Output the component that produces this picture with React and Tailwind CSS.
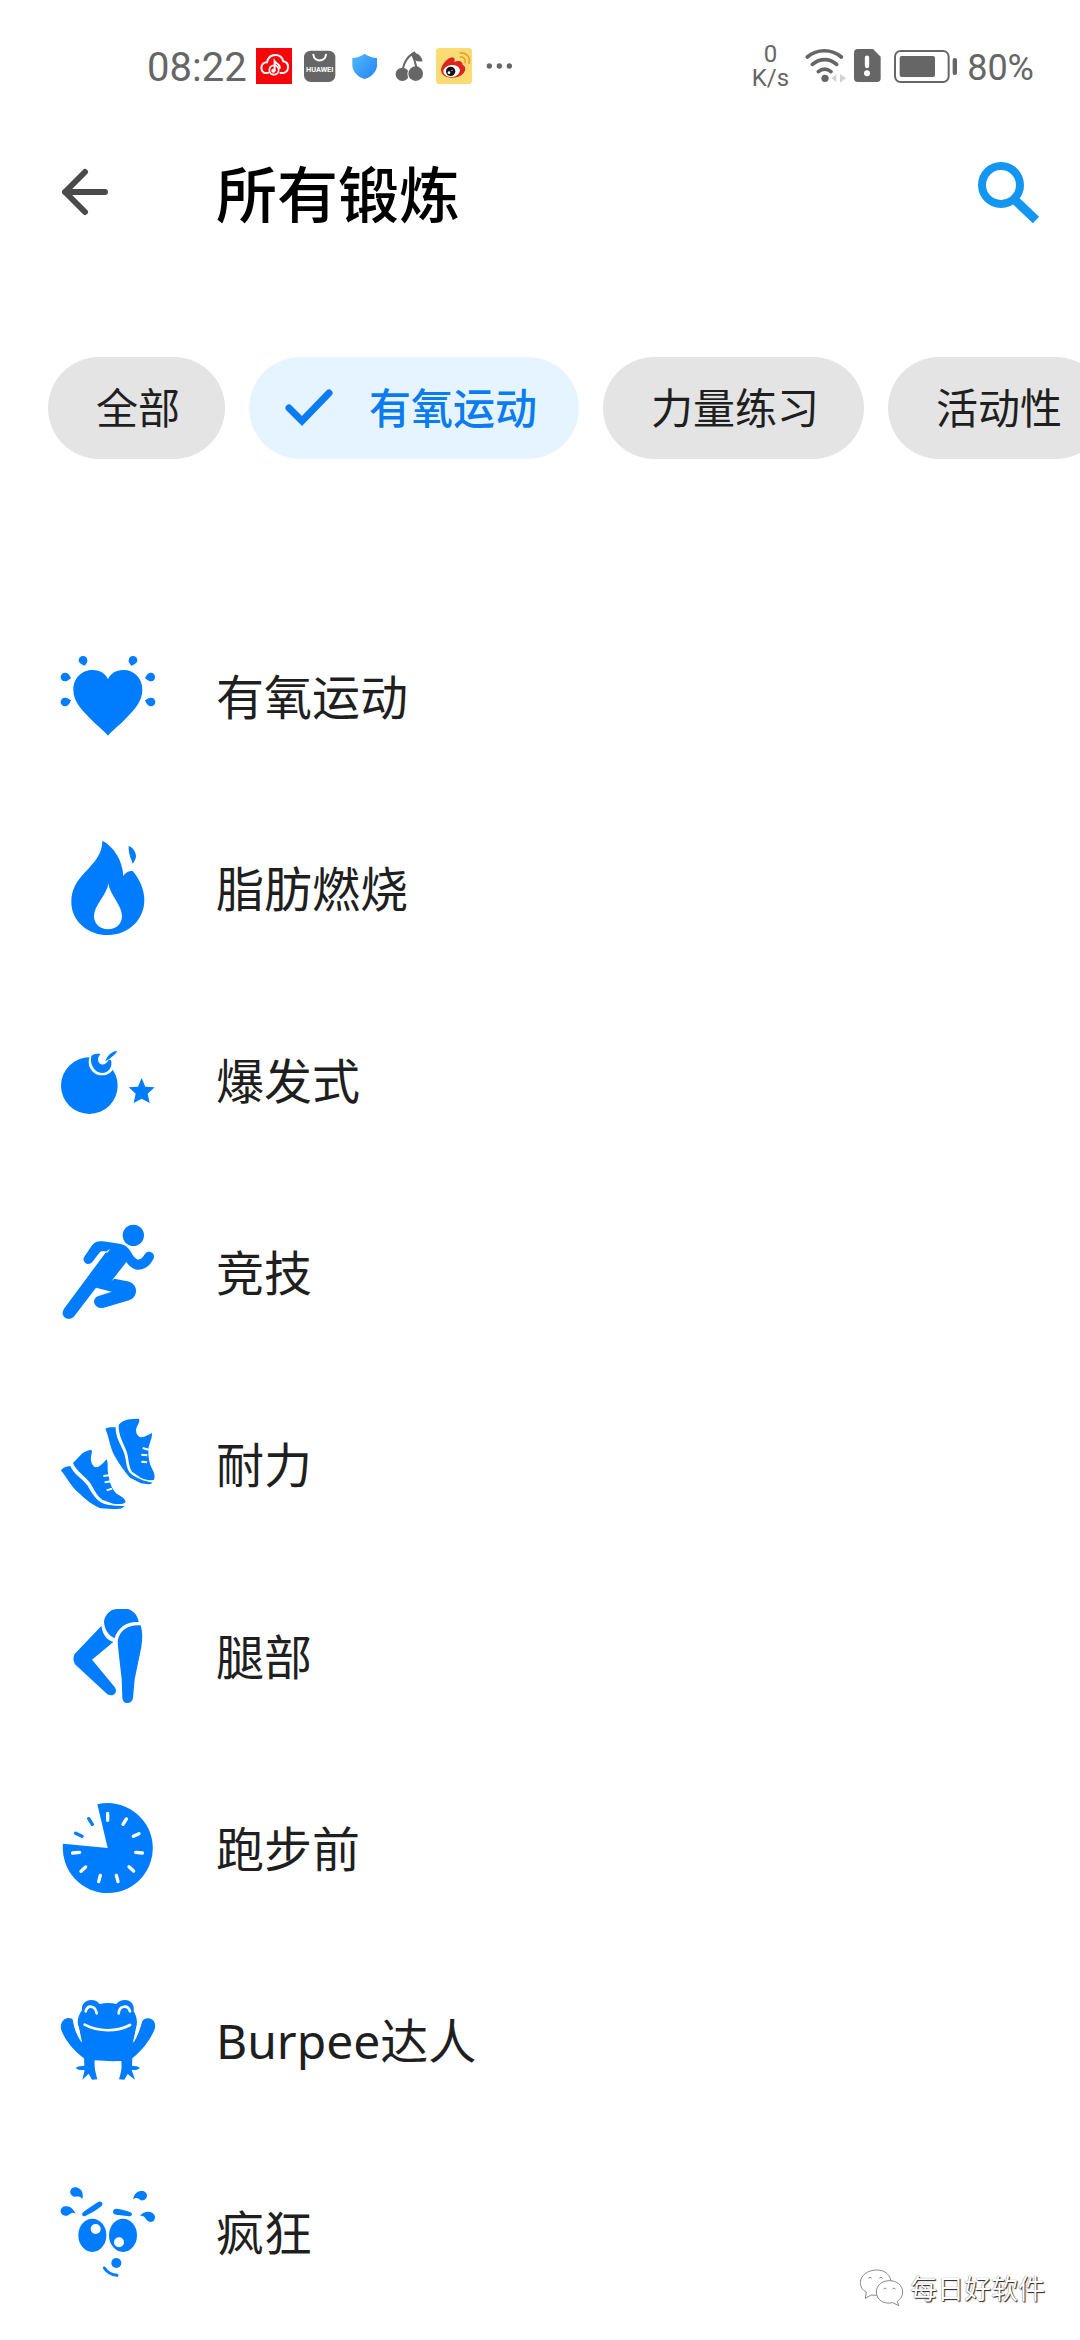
import React, { useState } from 'react';

const filters = ['全部', '有氧运动', '力量练习', '活动性'];

const HeartIcon = () => (
    <svg viewBox="60 24 288 288" fill="currentColor" className="size-24 shrink-0" aria-hidden="true">
        <path d="M204 287C196 276 178 263 158 243C128 212 100 187 100 149C100 112 128 90 158 90C181 90 197 101 204 118C211 101 227 90 250 90C280 90 307 112 307 149C307 187 280 212 250 243C230 263 212 276 204 287Z" />
        <path d="M134 77C122 73 116 68 116 61C116 53 122 48 129 48C137 48 142 54 142 61C142 67 139 72 134 77Z" />
        <path d="M274 77C286 73 292 68 292 61C292 53 286 48 279 48C271 48 266 54 266 61C266 67 269 72 274 77Z" />
        <path d="M93 114C85 121 80 124 75 124C67 124 62 118 62 111C62 104 68 98 75 98C83 98 88 103 93 114Z" />
        <path d="M315 114C323 121 328 124 333 124C341 124 345 118 345 111C345 104 340 98 333 98C325 98 320 103 315 114Z" />
        <path d="M93 181C85 175 80 173 75 173C67 173 62 179 62 186C62 193 68 199 75 199C83 199 88 193 93 181Z" />
        <path d="M315 181C323 175 328 173 333 173C341 173 346 179 346 186C346 193 340 199 333 199C325 199 320 193 315 181Z" />
    </svg>
);

const FlameIcon = () => (
    <svg viewBox="60 600 288 288" fill="currentColor" className="size-24 shrink-0" aria-hidden="true">
        <path fillRule="evenodd" d="M187 602C222 620 248 662 250 708C257 697 267 692 278 693C298 716 313 748 313 780C313 839 266 885 204 885C142 885 94 842 94 785C94 749 111 722 135 697C166 664 187 640 187 602ZM205 730C203 762 162 795 162 829C162 852 181 868 204 868C228 868 246 852 246 829C246 795 208 762 205 730Z" />
        <path d="M266 618C278 622 287 634 288 648C288 657 283 664 278 671C274 656 265 644 266 618Z" />
    </svg>
);

const BombIcon = () => (
    <svg viewBox="60 6 288 288" fill="currentColor" className="size-24 shrink-0" aria-hidden="true">
        <circle cx="148" cy="167" r="85" />
        <circle cx="186" cy="96" r="40" fill="white" />
        <path d="M154 78C161 71 170 70 182 72C173 80 172 91 178 99C187 108 200 103 205 91L213 90C219 112 205 129 186 129C164 129 148 103 154 78Z" />
        <path d="M196 93C202 77 214 64 231 62C229 71 222 74 216 80C209 87 203 90 196 93Z" />
        <path d="M305 144L316 170L344 172L323 191L329 219L305 206L281 219L287 191L266 172L294 170Z" />
    </svg>
);

const RunnerIcon = () => (
    <svg viewBox="60 42 288 288" fill="currentColor" className="size-24 shrink-0" aria-hidden="true">
        <circle cx="280" cy="76" r="32" />
        <path d="M132 142L155 107C163 96 175 92 189 94L238 101C255 104 265 112 273 126C279 138 285 146 294 149C304 148 309 142 314 133C319 124 329 123 337 129C344 135 343 143 338 151C326 171 311 180 293 179C279 178 268 169 259 156L214 214L223 206L262 214C279 218 289 229 288 245C287 257 280 266 267 271L192 293C179 297 167 291 163 280C160 270 165 261 176 258L215 245L168 233L104 317C97 327 83 330 74 322C66 315 66 305 72 296L199 125C192 122 181 122 176 131L157 156C151 163 141 164 135 158C130 153 129 147 132 142Z" />
        <path d="M192 130L210 116L204 127Z" fill="white" />
    </svg>
);

const ShoesIcon = () => (
    <svg viewBox="60 48 288 288" fill="currentColor" className="size-24 shrink-0" aria-hidden="true">
        <path d="M99 189L127 160C136 154 145 150 153 149C158 153 155 161 153 170C151 185 158 200 168 202C180 202 190 188 200 178C206 192 201 207 205 222C208 244 214 266 230 281C243 289 254 293 257 305C251 314 235 313 219 311L187 299C168 285 162 266 150 248C137 230 108 213 99 189Z" />
        <path d="M63 212C69 202 80 199 91 198C100 222 128 236 143 257C153 275 163 292 181 306C199 318 232 317 253 318C248 327 235 327 219 327L181 325C154 314 134 295 113 276C91 256 80 230 63 212Z" />
        <path d="M236 75C244 64 260 58 277 57L296 56C302 61 294 72 290 82C285 96 291 108 302 112C314 112 324 104 336 99C337 118 325 132 325 153C325 171 327 188 335 204C341 215 347 227 342 239C330 243 315 239 302 233L276 215C264 196 267 174 260 155C252 132 235 108 236 75Z" />
        <path d="M196 86C204 81 216 82 227 82C226 112 243 135 252 158C259 177 257 200 270 219C288 235 315 244 337 248C332 254 320 253 303 250L270 233C251 211 235 188 222 164C209 137 207 110 196 86Z" />
        <path d="M190 228L208 226M194 247L214 244M200 271L216 266M308 144L326 149M304 164L322 166M304 185L321 187" stroke="white" strokeWidth="6" />
    </svg>
);

const LegIcon = () => (
    <svg viewBox="60 54 288 288" fill="currentColor" className="size-24 shrink-0" aria-hidden="true">
        <path d="M229 57L264 57C281 62 294 78 296 96C262 94 234 111 224 144C204 137 194 118 192 96C194 76 208 59 229 57Z" />
        <path d="M184 108C188 133 199 150 220 156L156 209L224 291C231 301 228 311 220 314C212 318 204 315 198 309L108 226C99 217 98 199 106 190Z" />
        <path d="M302 106C308 126 308 146 304 171L284 268L279 324C277 334 271 339 262 339C253 339 248 333 247 324L245 268L235 180L233 153C238 120 267 103 302 106Z" />
    </svg>
);

const ClockIcon = () => (
    <svg viewBox="60 30 288 288" fill="currentColor" className="size-24 shrink-0" aria-hidden="true">
        <path d="M203 174L172 43A135 135 0 1 1 69 161Z" />
        <path d="M203 70V91M259 87L249 103M297 131L280 139M287 187L307 189M267 230L281 243M229 256L234 275M181 256L176 275M137 231L123 244M119 187L98 189" stroke="white" strokeWidth="10" strokeLinecap="round" />
        <path d="M146 86L157 103M107 130L126 139" stroke="currentColor" strokeWidth="10" strokeLinecap="round" />
    </svg>
);

const FrogIcon = () => (
    <svg viewBox="60 36 288 288" fill="currentColor" className="size-24 shrink-0" aria-hidden="true">
        <path d="M126 91C124 72 137 60 153 60C165 60 174 65 179 72C196 68 214 68 229 72C235 64 244 60 256 60C272 60 284 73 281 94C290 108 294 127 288 144L280 188C292 170 297 149 304 128C309 117 320 113 331 116C345 120 348 135 344 147C333 176 310 208 277 235L276 257C285 259 293 257 300 264C293 270 284 271 275 270L285 299L263 282L253 299L237 298C239 287 247 274 244 243C215 244 187 243 164 241C162 268 169 282 172 298L156 299L146 281L127 299L134 270C123 271 114 270 107 264C115 257 125 259 133 257L132 235C99 211 73 178 63 147C60 130 69 117 83 114C91 113 96 116 100 120C105 145 111 166 125 185L117 145C109 127 114 107 126 91Z" />
        <path d="M104 116L116 140L126 188C111 168 102 146 98 116ZM304 118L290 142L278 189C294 168 301 146 308 118Z" fill="white" />
        <path d="M134 134C174 156 232 156 270 135M137 94C142 74 166 75 170 100M236 100C237 76 264 73 270 94" stroke="white" strokeWidth="8" fill="none" strokeLinecap="round" />
    </svg>
);

const CrazyIcon = () => (
    <svg viewBox="60 42 288 288" fill="currentColor" className="size-24 shrink-0" aria-hidden="true">
        <ellipse cx="157" cy="196" rx="42" ry="50" />
        <ellipse cx="249" cy="196" rx="42" ry="50" />
        <circle cx="167" cy="177" r="15" fill="white" />
        <circle cx="237" cy="217" r="15" fill="white" />
        <circle cx="229" cy="279" r="15" />
        <path d="M127 130C130 126 134 123 137 121L174 96C184 90 192 102 184 109C170 121 153 130 136 138C129 141 125 136 127 130Z" />
        <path d="M229 116C244 117 257 121 270 126C279 129 277 139 268 139L228 134C215 132 217 116 229 116Z" />
        <path d="M193 294C203 309 215 315 231 316" fill="none" stroke="currentColor" strokeWidth="9" strokeLinecap="round" />
        <path d="M127 88C123 79 114 79 104 80C95 78 89 70 91 62C94 53 103 50 113 53C126 57 131 72 127 88Z" />
        <path d="M107 131C97 124 91 131 84 136C75 140 65 136 62 126C61 115 68 109 79 109C92 109 101 119 107 131Z" />
        <path d="M279 88C284 69 293 62 308 63C319 65 323 74 320 82C317 90 308 94 300 89C293 84 288 82 279 88Z" />
        <path d="M300 137C309 126 324 122 336 128C345 133 347 142 343 150C338 158 328 157 321 151C315 143 313 136 300 137Z" />
    </svg>
);

const workouts = [
    { name: '有氧运动', Icon: HeartIcon },
    { name: '脂肪燃烧', Icon: FlameIcon },
    { name: '爆发式', Icon: BombIcon },
    { name: '竞技', Icon: RunnerIcon },
    { name: '耐力', Icon: ShoesIcon },
    { name: '腿部', Icon: LegIcon },
    { name: '跑步前', Icon: ClockIcon },
    { name: 'Burpee达人', Icon: FrogIcon },
    { name: '疯狂', Icon: CrazyIcon },
];

const StatusBar = () => (
    <div className="flex h-[132px] items-center justify-between pl-[147px] pr-[46px] font-['Roboto',sans-serif] text-[#666666]">
        <div className="flex items-center gap-[9px]">
            <span className="pt-1 text-[40px] leading-none">08:22</span>
            <svg viewBox="378 54 108 108" className="size-9" aria-hidden="true">
                <path d="M378 54H486V162H378Z" fill="#f70509" />
                <g fill="none" stroke="white" strokeWidth="6" strokeLinecap="round">
                    <path d="M416 128C404 132 394 126 394 114C394 103 402 97 411 97C414 82 424 75 436 75C449 75 457 82 460 94C470 96 475 104 474 114C473 124 465 131 451 129" />
                    <circle cx="432" cy="120" r="14" strokeWidth="5" />
                    <path d="M434 122V94C440 103 451 102 449 114" />
                </g>
                <circle cx="430" cy="122" r="6" fill="white" />
            </svg>
            <svg viewBox="513 54 108 108" className="size-9" aria-hidden="true">
                <rect x="522" y="62" width="94" height="94" rx="20" fill="#666666" />
                <path d="M550 74C553 97 585 97 588 74" fill="none" stroke="white" strokeWidth="6" strokeLinecap="round" />
                <text x="569" y="126" textAnchor="middle" fill="white" fontSize="22" fontWeight="700">HUAWEI</text>
            </svg>
            <svg viewBox="648 54 108 108" className="size-9" aria-hidden="true">
                <defs>
                    <linearGradient id="shield" x1="0" y1="0" x2="1" y2="1">
                        <stop offset="0" stopColor="#51b8ff" />
                        <stop offset="1" stopColor="#2485f0" />
                    </linearGradient>
                </defs>
                <path d="M704 71C714 79 728 83 741 84V108C739 128 722 142 704 147C686 142 669 128 667 108V84C680 83 694 79 704 71Z" fill="url(#shield)" />
            </svg>
            <svg viewBox="783 54 108 108" className="size-9" aria-hidden="true">
                <circle cx="817" cy="133" r="20" fill="#666666" />
                <circle cx="857" cy="131" r="25" fill="white" />
                <circle cx="857" cy="131" r="22" fill="#666666" />
                <path d="M819 114C824 93 834 80 848 71C852 87 856 98 859 112" fill="none" stroke="#666666" strokeWidth="6" />
                <path d="M840 74L853 64L858 70C868 73 875 81 878 94C862 97 850 91 845 78Z" fill="#666666" />
            </svg>
            <svg viewBox="918 54 108 108" className="size-9" aria-hidden="true">
                <rect x="918" y="54" width="108" height="108" rx="10" fill="#fbdc74" />
                <path d="M933 119C935 103 953 83 966 82C975 82 975 91 973 96C983 91 998 90 998 105C1008 109 1009 121 999 131C983 149 934 149 933 119Z" fill="#dd2420" />
                <ellipse cx="965" cy="123" rx="25" ry="18" fill="white" transform="rotate(-8 965 123)" />
                <circle cx="962" cy="124" r="14" fill="#111111" />
                <circle cx="957" cy="128" r="4" fill="white" />
                <circle cx="966" cy="121" r="2" fill="white" />
                <path d="M990 69C1009 67 1022 81 1017 100M991 81C1002 80 1008 88 1005 98" fill="none" stroke="#e5a02b" strokeWidth="5" strokeLinecap="round" />
            </svg>
            <svg viewBox="1053 54 108 108" fill="#666666" className="size-9" aria-hidden="true">
                <circle cx="1078" cy="108" r="8" />
                <circle cx="1108" cy="108" r="8" />
                <circle cx="1138" cy="108" r="8" />
            </svg>
        </div>
        <div className="flex items-center">
            <div className="mr-4 flex flex-col items-center text-[24px] leading-[24px]">
                <span>0</span>
                <span>K/s</span>
            </div>
            <svg viewBox="222 54 126 108" className="mr-[7px] h-9 w-[42px]" aria-hidden="true">
                <path d="M229 81C258 56 302 56 331 81M244 103C267 84 295 84 317 103M262 125C274 115 288 115 300 125" fill="none" stroke="#666666" strokeWidth="11" strokeLinecap="round" />
                <circle cx="282" cy="145" r="11" fill="#666666" />
                <path d="M316 133V157L302 145ZM327 132L345 145L327 158Z" fill="#d2d2d2" />
            </svg>
            <svg viewBox="369 54 81 108" className="mr-[13px] h-9 w-[27px]" aria-hidden="true">
                <path d="M380 57H426L449 80V145Q449 156 438 156H380Q369 156 369 145V68Q369 57 380 57Z" fill="#666666" />
                <path d="M408 83V108" stroke="white" strokeWidth="13" strokeLinecap="round" />
                <circle cx="408" cy="130" r="9" fill="white" />
            </svg>
            <svg viewBox="489 54 192 108" className="mr-[9px] h-9 w-16" aria-hidden="true">
                <rect x="492" y="63" width="161" height="93" rx="17" fill="none" stroke="#666666" strokeWidth="6" />
                <rect x="506" y="78" width="106" height="63" rx="6" fill="#666666" />
                <rect x="665" y="84" width="13" height="51" rx="6" fill="#666666" />
            </svg>
            <span className="pt-1 text-[36px] leading-none">80%</span>
        </div>
    </div>
);

const Header = () => (
    <header className="flex h-[120px] items-center justify-between pl-[60px] pr-10">
        <div className="flex items-center gap-[108px]">
            <button type="button" aria-label="返回">
                <svg viewBox="0 0 48 48" fill="none" stroke="#4a4a4a" strokeWidth="6" strokeLinecap="round" strokeLinejoin="round" className="size-12">
                    <path d="M45 24H5M25 4L5 24L25 44" />
                </svg>
            </button>
            <h1 className="pt-1 text-[61px] font-medium leading-none text-black">所有锻炼</h1>
        </div>
        <button type="button" aria-label="搜索">
            <svg viewBox="0 0 64 64" fill="none" stroke="#1396f0" className="size-16">
                <circle cx="25" cy="25" r="19" strokeWidth="8" />
                <path d="M39 40L60 60" strokeWidth="9" />
            </svg>
        </button>
    </header>
);

const App = () => {
    const [active, setActive] = useState('有氧运动');

    return (
        <div className="relative min-h-screen overflow-hidden bg-white font-['Noto_Sans','Noto_Sans_CJK_SC',sans-serif]" lang="zh-CN">
            <StatusBar />
            <Header />

            <div className="mt-[105px] flex gap-6 overflow-x-auto pl-12 [scrollbar-width:none]">
                {filters.map((name) => (
                    <button
                        key={name}
                        type="button"
                        aria-pressed={active === name}
                        onClick={() => setActive(name)}
                        className={`flex h-[102px] shrink-0 items-center gap-9 rounded-full text-[42px] leading-none ${active === name ? 'bg-[#e6f4ff] pl-9 pr-[42px] font-medium text-[#0a7cf0]' : 'bg-[#e4e4e4] pl-12 pr-[45px] text-[#1f1f1f]'}`}
                    >
                        {active === name && (
                            <svg viewBox="0 0 48 38" fill="none" stroke="currentColor" strokeWidth="7" strokeLinecap="round" className="h-[38px] w-12" aria-hidden="true">
                                <path d="M4 19L17 32L44 4" />
                            </svg>
                        )}
                        {name}
                    </button>
                ))}
            </div>

            <ul className="mt-[141px]">
                {workouts.map(({ name, Icon }) => (
                    <li key={name}>
                        <a href="#" className="flex h-48 items-center gap-[60px] px-[60px] text-[#007cff]">
                            <Icon />
                            <span className="pt-[2px] text-[48px] leading-none text-[#1f1f1f]">{name}</span>
                        </a>
                    </li>
                ))}
            </ul>

            {/* Account watermark */}
            <div className="absolute bottom-8 right-[35px] flex items-center gap-[6px]">
                <svg viewBox="54 60 138 120" fill="white" stroke="#8a8a8a" strokeWidth="3" className="h-10 w-[46px]" aria-hidden="true">
                    <path d="M110 66C84 66 61 82 61 104C61 117 68 126 79 133L76 151L93 141C130 146 153 132 153 104C153 82 136 66 110 66Z" />
                    <path d="M148 98C126 98 109 112 109 132C109 156 132 170 158 164L176 173L172 160C183 152 188 144 188 132C188 112 171 98 148 98Z" />
                    <path d="M85 91Q90 84 95 91M118 91Q123 84 128 91M131 123Q135 117 139 123M158 123Q162 117 166 123" fill="none" />
                </svg>
                <span className="text-[27px] leading-none text-white [text-shadow:1px_1px_1px_#222222,0_0_1px_#555555]">每日好软件</span>
            </div>
        </div>
    );
};

export default App;
